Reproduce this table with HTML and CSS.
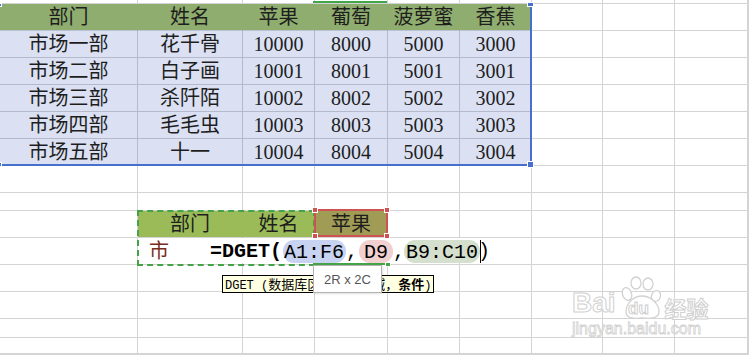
FILE: index.html
```html
<!DOCTYPE html>
<html lang="zh">
<head>
<meta charset="utf-8">
<title>DGET</title>
<link rel="stylesheet" href="styles.css">
</head>
<body>
<div class="sheet">
  <div></div><div></div><div></div><div></div><div></div><div></div><div></div><div></div><div></div><div></div>

  <div class="h">部门</div><div class="h">姓名</div><div class="h">苹果</div><div class="h">葡萄</div><div class="h">菠萝蜜</div><div class="h">香蕉</div><div></div><div></div><div></div><div></div>

  <div class="d">市场一部</div><div class="d">花千骨</div><div class="d">10000</div><div class="d">8000</div><div class="d">5000</div><div class="d">3000</div><div></div><div></div><div></div><div></div>
  <div class="d">市场二部</div><div class="d">白子画</div><div class="d">10001</div><div class="d">8001</div><div class="d">5001</div><div class="d">3001</div><div></div><div></div><div></div><div></div>
  <div class="d">市场三部</div><div class="d">杀阡陌</div><div class="d">10002</div><div class="d">8002</div><div class="d">5002</div><div class="d">3002</div><div></div><div></div><div></div><div></div>
  <div class="d">市场四部</div><div class="d">毛毛虫</div><div class="d">10003</div><div class="d">8003</div><div class="d">5003</div><div class="d">3003</div><div></div><div></div><div></div><div></div>
  <div class="d">市场五部</div><div class="d">十一</div><div class="d">10004</div><div class="d">8004</div><div class="d">5004</div><div class="d">3004</div><div></div><div></div><div></div><div></div>

  <div></div><div></div><div></div><div></div><div></div><div></div><div></div><div></div><div></div><div></div>
  <div></div><div></div><div></div><div></div><div></div><div></div><div></div><div></div><div></div><div></div>

  <div></div><div class="g">部门</div><div class="g">姓名</div><div class="o">苹果</div><div></div><div></div><div></div><div></div><div></div><div></div>
  <div></div><div class="red">市</div><div></div><div></div><div></div><div></div><div></div><div></div><div></div><div></div>

  <div></div><div></div><div></div><div></div><div></div><div></div><div></div><div></div><div></div><div></div>
  <div></div><div></div><div></div><div></div><div></div><div></div><div></div><div></div><div></div><div></div>
  <div></div><div></div><div></div><div></div><div></div><div></div><div></div><div></div><div></div><div></div>
  <div></div><div></div><div></div><div></div><div></div><div></div><div></div><div></div><div></div><div></div>
  <div></div><div></div><div></div><div></div><div></div><div></div><div></div><div></div><div></div><div></div>
</div>

<div class="topmark"></div>

<div class="sel-blue">
  <span class="hd hd-tr"></span>
  <span class="hd hd-br"></span>
  <span class="hd hd-bl"></span>
  <span class="hd hd-tl"></span>
</div>

<div class="copy-dash"></div>
<div class="green-seg"><span class="gh gh-r"></span></div>

<div class="sel-red">
  <span class="rh rh-tl"></span><span class="rh rh-tr"></span>
  <span class="rh rh-bl"></span><span class="rh rh-br"></span>
</div>

<div class="edit">
  <span class="fn">=DGET(</span><span class="pill p-blue">A1:F6</span><span class="cm">,</span><span class="pill p-red">D9</span><span class="cm">,</span><span class="pill p-green">B9:C10</span><span class="caret"></span><span class="cl">)</span>
</div>

<div class="tip"><span class="lat">DGET (</span>数据库区域，操作域，<b>条件</b><span class="lat">)</span></div>

<div class="size">2R x 2C</div>

<div class="wm">
  <div class="wm-top">
    <span class="wm-bai">Bai</span>
    <svg class="paw" width="42" height="44" viewBox="0 0 42 44">
      <g fill="#fff" stroke="#d2d2d2" stroke-width="1.3">
        <ellipse cx="6" cy="18" rx="4.5" ry="6.5" transform="rotate(-20 6 18)"/>
        <ellipse cx="15" cy="7" rx="5" ry="6"/>
        <ellipse cx="27" cy="8" rx="5" ry="6"/>
        <ellipse cx="35" cy="20" rx="4.5" ry="5.5" transform="rotate(20 35 20)"/>
        <path d="M5 36 C5 26 14 20 21 20 C28 20 38 26 38 36 C38 42 30 43 21 42 C12 43 5 42 5 36 Z"/>
      </g>
    </svg>
    <span class="wm-du">du</span>
    <span class="wm-cn">经验</span>
  </div>
  <div class="wm-url">jingyan.baidu.com</div>
</div>
</body>
</html>
```

FILE: styles.css
```css
html, body {
  margin: 0;
  padding: 0;
}

body {
  width: 749px;
  height: 355px;
  overflow: hidden;
  position: relative;
  background: #ffffff;
  font-family: "Liberation Serif", "Noto Sans CJK SC", serif;
}

.sheet {
  display: grid;
  grid-template-columns: 138px 105px 72px 73px 72px 72px 71px 72px 73px 1px;
  grid-template-rows: 4px repeat(7, 27px) 18px repeat(4, 27px) 19px 16px 1px;
}

.sheet > div {
  box-sizing: border-box;
  border-right: 1px solid #d4d4d4;
  border-bottom: 1px solid #d4d4d4;
  display: flex;
  align-items: center;
  justify-content: center;
  font-size: 20px;
  line-height: 1;
  color: #1e1e1e;
  white-space: nowrap;
  overflow: hidden;
}

.sheet > .h {
  background: #8fad6e;
  border-right-color: #8fad6e;
  border-bottom-color: #b9c3cf;
}

.sheet > .d {
  background: #dbe1f3;
  border-right-color: #b5bacb;
  border-bottom-color: #b5bacb;
}

.sheet > .g {
  background: #9bbb59;
  border-right-color: #9bbb59;
}

.sheet > .o {
  background: #a19c55;
}

.sheet > .red {
  color: #7a2c1c;
  justify-content: flex-start;
  padding-left: 11px;
}

/* small green mark on top edge */
.topmark {
  position: absolute;
  left: 313px;
  top: 1px;
  width: 74px;
  height: 2px;
  background: #3fa64a;
}

/* blue reference range A1:F6 */
.sel-blue {
  position: absolute;
  left: -10px;
  top: 4px;
  width: 542px;
  height: 162px;
  box-sizing: border-box;
  border-right: 2px solid #4670cc;
  border-bottom: 2px solid #4670cc;
}

.hd {
  position: absolute;
  background: #4670cc;
  border: 1px solid #ffffff;
}
.hd-tr { right: -4px; top: -2px; width: 5px; height: 3px; }
.hd-br { right: -4px; bottom: -4px; width: 5px; height: 5px; }
.hd-bl { left: 8px; bottom: -3px; width: 2px; height: 3px; }
.hd-tl { left: 8px; top: -1px; width: 2px; height: 2px; }

/* green copy marquee / reference B9:C10 */
.copy-dash {
  position: absolute;
  left: 137px;
  top: 210px;
  width: 178px;
  height: 56px;
  box-sizing: border-box;
  border: 2px dashed #45a347;
}

.green-seg {
  position: absolute;
  left: 313px;
  top: 263px;
  width: 75px;
  height: 2px;
  background: #45a347;
}
.gh {
  position: absolute;
  width: 4px;
  height: 4px;
  background: #45a347;
  border: 1px solid #ffffff;
}
.gh-r { right: -3px; top: -2px; }

/* red reference D9 */
.sel-red {
  position: absolute;
  left: 314px;
  top: 209px;
  width: 74px;
  height: 28px;
  box-sizing: border-box;
  border: 2px solid #cf5252;
}
.rh {
  position: absolute;
  width: 4px;
  height: 4px;
  background: #cf5252;
  border: 1px solid #ffffff;
}
.rh-tl { left: -4px; top: -4px; }
.rh-tr { right: -4px; top: -4px; }
.rh-bl { left: -4px; bottom: -4px; }
.rh-br { right: -4px; bottom: -4px; }

/* in-cell formula editor */
.edit {
  position: absolute;
  left: 173px;
  top: 238px;
  width: 318px;
  height: 25px;
  box-sizing: border-box;
  padding-left: 37px;
  background: #ffffff;
  display: flex;
  align-items: center;
  font-family: "Liberation Mono", "Noto Sans CJK SC", monospace;
  font-size: 20px;
  color: #000000;
  white-space: nowrap;
}

.fn {
  font-weight: bold;
  line-height: 25px;
  padding-top: 2px;
}

.pill {
  height: 23px;
  line-height: 26px;
  border-radius: 11px;
  margin-top: 1px;
}
.p-blue { background: #c7d3f1; padding: 0 2px 0 1px; margin-left: 1px; }
.p-red { background: #f1d0d0; padding: 0 5px; margin-left: 1px; }
.p-green { background: #d4dfcd; padding: 0 2px; margin-left: -1px; }

.cm {
  line-height: 25px;
  padding-top: 2px;
}

.caret {
  width: 1px;
  height: 23px;
  background: #000000;
  margin-top: 1px;
}

.cl {
  line-height: 25px;
  padding-top: 2px;
  margin-left: -3px;
}

/* function signature tooltip */
.tip {
  position: absolute;
  left: 222px;
  top: 275px;
  height: 18px;
  box-sizing: border-box;
  padding: 0 2px;
  border: 1px solid #000000;
  background: #ffffe1;
  font-family: "Noto Sans CJK SC", sans-serif;
  font-size: 13px;
  line-height: 16px;
  color: #000000;
  white-space: nowrap;
}
.tip .lat {
  font-family: "Liberation Mono", monospace;
  font-size: 12px;
}
.tip b {
  font-weight: bold;
}

/* size popup */
.size {
  position: absolute;
  left: 313px;
  top: 265px;
  width: 69px;
  height: 28px;
  box-sizing: border-box;
  border: 1px solid #b3b3b3;
  background: #ffffff;
  box-shadow: 1px 1px 2px rgba(0, 0, 0, 0.12);
  display: flex;
  align-items: center;
  justify-content: center;
  font-family: "Liberation Sans", Arial, sans-serif;
  font-size: 13px;
  color: #555555;
}

/* watermark */
.wm {
  position: absolute;
  left: 572px;
  top: 274px;
  width: 140px;
}
.wm-top {
  position: relative;
  height: 44px;
  display: flex;
  align-items: flex-end;
}
.wm-bai,
.wm-du,
.wm-cn {
  color: #ffffff;
  -webkit-text-stroke: 1px #d0d0d0;
  line-height: 1;
}
.wm-bai {
  font-family: "Liberation Sans", Arial, sans-serif;
  font-weight: bold;
  font-size: 28px;
  margin-bottom: 1px;
}
.paw {
  margin-left: 5px;
  margin-bottom: -2px;
}
.wm-du {
  position: absolute;
  left: 56px;
  bottom: 1px;
  font-family: "Liberation Sans", Arial, sans-serif;
  font-weight: bold;
  font-size: 17px;
}
.wm-cn {
  font-family: "Noto Sans CJK SC", sans-serif;
  font-weight: bold;
  font-size: 22px;
  margin-left: 2px;
  margin-bottom: 0;
}
.wm-url {
  margin-top: 2px;
  font-family: "Liberation Sans", Arial, sans-serif;
  font-size: 16px;
  line-height: 18px;
  color: #ffffff;
  -webkit-text-stroke: 0.8px #d0d0d0;
}
```
